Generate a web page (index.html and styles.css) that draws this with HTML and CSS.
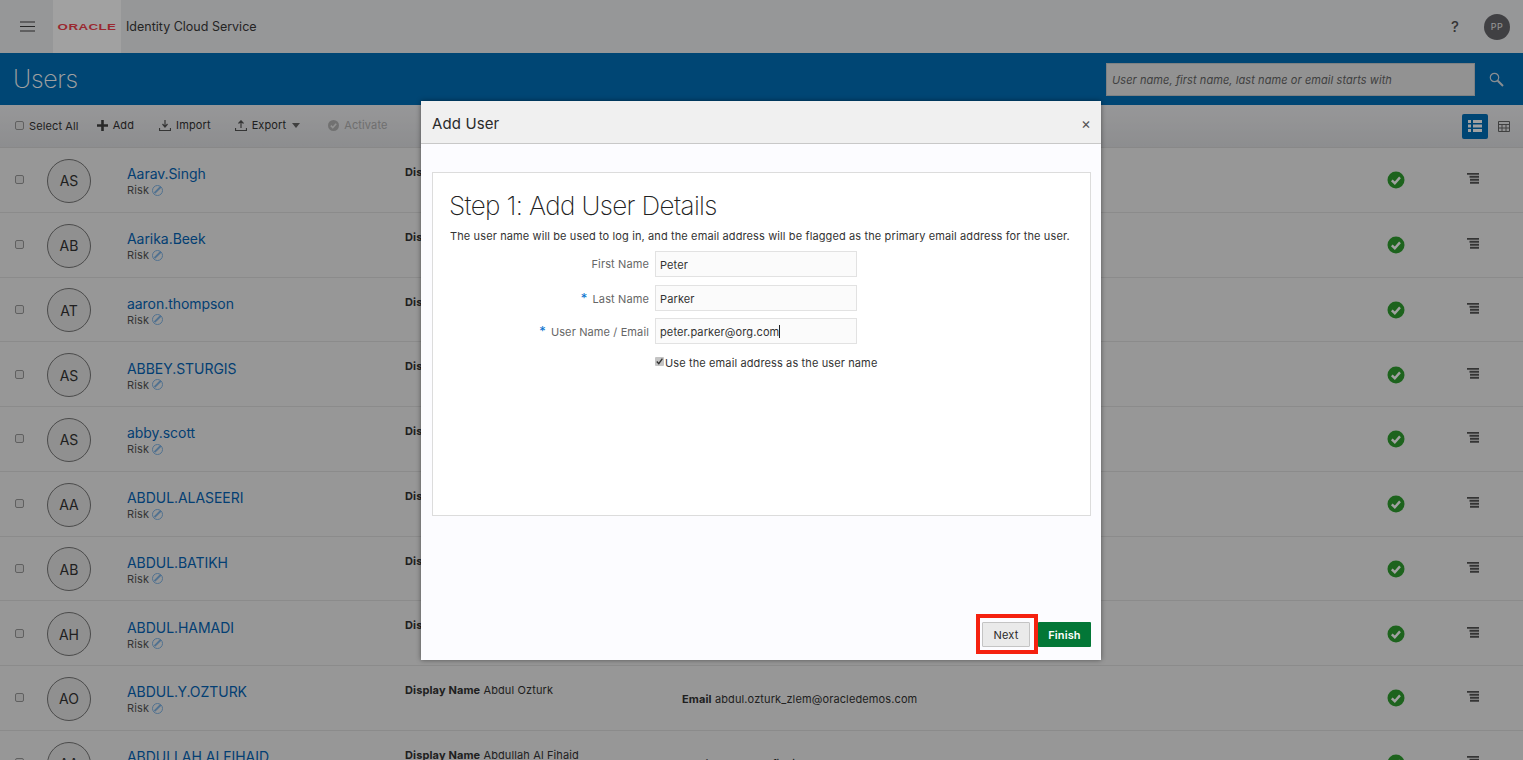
FILE: index.html
```html
<!DOCTYPE html>
<html>
<head>
    <link rel="stylesheet" href="styles.css">
</head>
<body>
    <!-- Top bar -->
    <div class="topbar">
        <svg class="burger" width="15" height="11" viewBox="0 0 15 11"><path d="M0 1h15M0 5.500h15M0 10h15" stroke="#404040" stroke-width="1.200"/></svg>
        <div class="logo"><span class="logo-text">ORACLE</span></div>
        <span class="app-name">Identity Cloud Service</span>
        <span class="help">?</span>
        <span class="me">PP</span>
    </div>

    <!-- Title band -->
    <div class="band">
        <span class="band-title">Users</span>
        <div class="search-box">User name, first name, last name or email starts with</div>
        <svg class="search-icon" width="15" height="15" viewBox="0 0 15 15"><circle cx="5.500" cy="5.500" r="4.200" fill="none" stroke="#d8dfe6" stroke-width="1.200"/><path d="M8.700 8.700l5.300 5.300" stroke="#d8dfe6" stroke-width="2"/></svg>
    </div>

    <!-- Toolbar -->
    <div class="toolbar">
        <span class="box"></span><span class="tool-select">Select All</span>
        <span class="tool tool-add"><svg width="11" height="11" viewBox="0 0 11 11"><path d="M5.500 0v11M0 5.500h11" stroke="#404040" stroke-width="2.600"/></svg>Add</span>
        <span class="tool tool-import"><svg width="12" height="11" viewBox="0 0 12 11"><path d="M6 0v6M3.500 4L6 7l2.500-3M.5 8v2.500h11V8" fill="none" stroke="#555" stroke-width="1.200"/></svg>Import</span>
        <span class="tool tool-export"><svg width="12" height="11" viewBox="0 0 12 11"><path d="M6 8V1M3.500 3.500L6 .8l2.500 2.700M.5 8v2.500h11V8" fill="none" stroke="#555" stroke-width="1.200"/></svg>Export<i class="caret"></i></span>
        <span class="tool tool-off"><svg width="11" height="11" viewBox="0 0 11 11"><circle cx="5.500" cy="5.500" r="5.500" fill="#b4b4b4"/><path d="M2.800 5.600l2 2 3.400-3.800" fill="none" stroke="#e8e8e8" stroke-width="1.500"/></svg>Activate</span>
        <div class="view-switch">
            <span class="view-on"><svg width="14" height="12" viewBox="0 0 14 12"><path d="M0 0h3v3H0zM5 0h9v3H5zM0 4.500h3v3H0zM5 4.500h9v3H5zM0 9h3v3H0zM5 9h9v3H5z" fill="#fff"/></svg></span>
            <svg class="view-grid" width="12" height="11" viewBox="0 0 12 11"><path d="M.5.5h11v10H.5zM.5 3.500h11M.5 7h11M4 3.500v7M8 3.500v7" fill="none" stroke="#666"/></svg>
        </div>
    </div>

    <!-- User list -->
    <div class="rows">
        <div class="row">
            <span class="box"></span><span class="avatar">AS</span>
            <div class="who"><a class="user">Aarav.Singh</a><span class="risk">Risk <i class="risk-icon"></i></span></div>
            <div class="display"><b>Display Name</b> Aarav Singh</div>
            <div class="email"></div>
            <span class="ok"><svg width="18" height="18" viewBox="0 0 18 18"><circle cx="9" cy="9" r="8.500" fill="#2f9e2f"/><path d="M4.800 9.300l3 2.900 5.200-5.800" fill="none" stroke="#fff" stroke-width="2.400"/></svg></span>
            <span class="more"><svg width="13" height="12" viewBox="0 0 13 12"><path d="M0 .8h12M2.500 3.800H12M3 6.800h9M3 9.800h9" stroke="#555" stroke-width="2"/></svg></span>
        </div>
        <div class="row">
            <span class="box"></span><span class="avatar">AB</span>
            <div class="who"><a class="user">Aarika.Beek</a><span class="risk">Risk <i class="risk-icon"></i></span></div>
            <div class="display"><b>Display Name</b> Aarika Beek</div>
            <div class="email"></div>
            <span class="ok"><svg width="18" height="18" viewBox="0 0 18 18"><circle cx="9" cy="9" r="8.500" fill="#2f9e2f"/><path d="M4.800 9.300l3 2.900 5.200-5.800" fill="none" stroke="#fff" stroke-width="2.400"/></svg></span>
            <span class="more"><svg width="13" height="12" viewBox="0 0 13 12"><path d="M0 .8h12M2.500 3.800H12M3 6.800h9M3 9.800h9" stroke="#555" stroke-width="2"/></svg></span>
        </div>
        <div class="row">
            <span class="box"></span><span class="avatar">AT</span>
            <div class="who"><a class="user">aaron.thompson</a><span class="risk">Risk <i class="risk-icon"></i></span></div>
            <div class="display"><b>Display Name</b> Aaron Thompson</div>
            <div class="email"></div>
            <span class="ok"><svg width="18" height="18" viewBox="0 0 18 18"><circle cx="9" cy="9" r="8.500" fill="#2f9e2f"/><path d="M4.800 9.300l3 2.900 5.200-5.800" fill="none" stroke="#fff" stroke-width="2.400"/></svg></span>
            <span class="more"><svg width="13" height="12" viewBox="0 0 13 12"><path d="M0 .8h12M2.500 3.800H12M3 6.800h9M3 9.800h9" stroke="#555" stroke-width="2"/></svg></span>
        </div>
        <div class="row">
            <span class="box"></span><span class="avatar">AS</span>
            <div class="who"><a class="user">ABBEY.STURGIS</a><span class="risk">Risk <i class="risk-icon"></i></span></div>
            <div class="display"><b>Display Name</b> Abbey Sturgis</div>
            <div class="email"></div>
            <span class="ok"><svg width="18" height="18" viewBox="0 0 18 18"><circle cx="9" cy="9" r="8.500" fill="#2f9e2f"/><path d="M4.800 9.300l3 2.900 5.200-5.800" fill="none" stroke="#fff" stroke-width="2.400"/></svg></span>
            <span class="more"><svg width="13" height="12" viewBox="0 0 13 12"><path d="M0 .8h12M2.500 3.800H12M3 6.800h9M3 9.800h9" stroke="#555" stroke-width="2"/></svg></span>
        </div>
        <div class="row">
            <span class="box"></span><span class="avatar">AS</span>
            <div class="who"><a class="user">abby.scott</a><span class="risk">Risk <i class="risk-icon"></i></span></div>
            <div class="display"><b>Display Name</b> Abby Scott</div>
            <div class="email"></div>
            <span class="ok"><svg width="18" height="18" viewBox="0 0 18 18"><circle cx="9" cy="9" r="8.500" fill="#2f9e2f"/><path d="M4.800 9.300l3 2.900 5.200-5.800" fill="none" stroke="#fff" stroke-width="2.400"/></svg></span>
            <span class="more"><svg width="13" height="12" viewBox="0 0 13 12"><path d="M0 .8h12M2.500 3.800H12M3 6.800h9M3 9.800h9" stroke="#555" stroke-width="2"/></svg></span>
        </div>
        <div class="row">
            <span class="box"></span><span class="avatar">AA</span>
            <div class="who"><a class="user">ABDUL.ALASEERI</a><span class="risk">Risk <i class="risk-icon"></i></span></div>
            <div class="display"><b>Display Name</b> Abdul Alaseeri</div>
            <div class="email"></div>
            <span class="ok"><svg width="18" height="18" viewBox="0 0 18 18"><circle cx="9" cy="9" r="8.500" fill="#2f9e2f"/><path d="M4.800 9.300l3 2.900 5.200-5.800" fill="none" stroke="#fff" stroke-width="2.400"/></svg></span>
            <span class="more"><svg width="13" height="12" viewBox="0 0 13 12"><path d="M0 .8h12M2.500 3.800H12M3 6.800h9M3 9.800h9" stroke="#555" stroke-width="2"/></svg></span>
        </div>
        <div class="row">
            <span class="box"></span><span class="avatar">AB</span>
            <div class="who"><a class="user">ABDUL.BATIKH</a><span class="risk">Risk <i class="risk-icon"></i></span></div>
            <div class="display"><b>Display Name</b> Abdul Batikh</div>
            <div class="email"></div>
            <span class="ok"><svg width="18" height="18" viewBox="0 0 18 18"><circle cx="9" cy="9" r="8.500" fill="#2f9e2f"/><path d="M4.800 9.300l3 2.900 5.200-5.800" fill="none" stroke="#fff" stroke-width="2.400"/></svg></span>
            <span class="more"><svg width="13" height="12" viewBox="0 0 13 12"><path d="M0 .8h12M2.500 3.800H12M3 6.800h9M3 9.800h9" stroke="#555" stroke-width="2"/></svg></span>
        </div>
        <div class="row">
            <span class="box"></span><span class="avatar">AH</span>
            <div class="who"><a class="user">ABDUL.HAMADI</a><span class="risk">Risk <i class="risk-icon"></i></span></div>
            <div class="display"><b>Display Name</b> Abdul Hamadi</div>
            <div class="email"></div>
            <span class="ok"><svg width="18" height="18" viewBox="0 0 18 18"><circle cx="9" cy="9" r="8.500" fill="#2f9e2f"/><path d="M4.800 9.300l3 2.900 5.200-5.800" fill="none" stroke="#fff" stroke-width="2.400"/></svg></span>
            <span class="more"><svg width="13" height="12" viewBox="0 0 13 12"><path d="M0 .8h12M2.500 3.800H12M3 6.800h9M3 9.800h9" stroke="#555" stroke-width="2"/></svg></span>
        </div>
        <div class="row">
            <span class="box"></span><span class="avatar">AO</span>
            <div class="who"><a class="user">ABDUL.Y.OZTURK</a><span class="risk">Risk <i class="risk-icon"></i></span></div>
            <div class="display"><b>Display Name</b> Abdul Ozturk</div>
            <div class="email"><b>Email</b> abdul.ozturk_zlem@oracledemos.com</div>
            <span class="ok"><svg width="18" height="18" viewBox="0 0 18 18"><circle cx="9" cy="9" r="8.500" fill="#2f9e2f"/><path d="M4.800 9.300l3 2.900 5.200-5.800" fill="none" stroke="#fff" stroke-width="2.400"/></svg></span>
            <span class="more"><svg width="13" height="12" viewBox="0 0 13 12"><path d="M0 .8h12M2.500 3.800H12M3 6.800h9M3 9.800h9" stroke="#555" stroke-width="2"/></svg></span>
        </div>
        <div class="row">
            <span class="box"></span><span class="avatar">AA</span>
            <div class="who"><a class="user">ABDULLAH.ALFIHAID</a><span class="risk">Risk <i class="risk-icon"></i></span></div>
            <div class="display"><b>Display Name</b> Abdullah Al Fihaid</div>
            <div class="email"><b>Email</b> abdullah.alfihaid@oracledemos.com</div>
            <span class="ok"><svg width="18" height="18" viewBox="0 0 18 18"><circle cx="9" cy="9" r="8.500" fill="#2f9e2f"/><path d="M4.800 9.300l3 2.900 5.200-5.800" fill="none" stroke="#fff" stroke-width="2.400"/></svg></span>
            <span class="more"><svg width="13" height="12" viewBox="0 0 13 12"><path d="M0 .8h12M2.500 3.800H12M3 6.800h9M3 9.800h9" stroke="#555" stroke-width="2"/></svg></span>
        </div>
    </div>

    <!-- Add User dialog -->
    <div class="dialog">
        <div class="dialog-head">
            <span>Add User</span>
            <span class="close">&times;</span>
        </div>
        <div class="dialog-body">
            <div class="panel">
                <h1>Step 1: Add User Details</h1>
                <p>The user name will be used to log in, and the email address will be flagged as the primary email address for the user.</p>
                <div class="form">
                    <label>First Name</label>
                    <div class="field">Peter</div>
                    <label><em>*</em>Last Name</label>
                    <div class="field">Parker</div>
                    <label><em>*</em>User Name / Email</label>
                    <div class="field">peter.parker@org.com<i class="cursor"></i></div>
                    <span></span>
                    <div class="use-email">
                        <svg width="9" height="9" viewBox="0 0 9 9"><rect width="9" height="9" rx="1" fill="#c4c4c4"/><path d="M1.800 4.500l2 2.200 3.600-5" fill="none" stroke="#333" stroke-width="1.400"/></svg>
                        <span>Use the email address as the user name</span>
                    </div>
                </div>
            </div>
        </div>
        <div class="dialog-foot">
            <div class="highlight"><button class="btn-next">Next</button></div>
            <button class="btn-finish">Finish</button>
        </div>
    </div>
</body>
</html>
```

FILE: styles.css
```css
html, body {
    margin: 0;
    height: 760px;
    overflow: hidden;
}

body {
    background: #f0f0f0;
    font-family: Inter, "Liberation Sans", sans-serif;
    font-size: 11px;
    letter-spacing: 0.12px;
    color: #333;
    position: relative;
}

/* page dim behind the dialog */
body::after {
    content: "";
    position: absolute;
    top: 0;
    left: 0;
    right: 0;
    bottom: 0;
    background: rgba(0, 0, 0, 0.37);
    z-index: 1;
}

.topbar {
    height: 53px;
    background: #eeeff1;
    display: flex;
    align-items: center;
}

.burger {
    margin-left: 20px;
}

.logo {
    margin-left: 18px;
    width: 68px;
    height: 53px;
    background: #ffffff;
    display: flex;
    align-items: center;
    justify-content: center;
}

.logo-text {
    color: #f4404c;
    font-family: "Liberation Sans", sans-serif;
    font-weight: bold;
    font-size: 9.500px;
    letter-spacing: 0.3px;
    transform: scaleX(1.4);
}

.app-name {
    margin-left: 5px;
    font-size: 12.500px;
    letter-spacing: 0;
    color: #3a3a3a;
}

.help {
    margin-left: auto;
    font-size: 15px;
    font-weight: 500;
    color: #555;
}

.me {
    margin: 0 13px 0 25px;
    width: 26px;
    height: 26px;
    border-radius: 50%;
    background: #66666a;
    color: #eee;
    font-size: 9px;
    letter-spacing: 0.4px;
    display: flex;
    align-items: center;
    justify-content: center;
}

.band {
    height: 52px;
    background: #006fb8;
    display: flex;
    align-items: center;
}

.band-title {
    margin-left: 13px;
    font-size: 25px;
    font-weight: 200;
    letter-spacing: -0.3px;
    color: #fff;
}

.search-box {
    margin-left: auto;
    width: 362px;
    height: 31px;
    line-height: 32px;
    padding-left: 5px;
    background: #e8e8e8;
    border: 1px solid #c8ccd0;
    font-size: 11px;
    font-style: italic;
    letter-spacing: 0.08px;
    color: #666;
}

.search-icon {
    margin: 0 19px 0 14px;
}

.toolbar {
    height: 43px;
    box-sizing: border-box;
    border-bottom: 1px solid #d8d8d8;
    background: linear-gradient(#f0f0f2, #dfe0e3);
    display: flex;
    align-items: center;
    padding: 0 0 2px 15px;
}

.box {
    width: 9px;
    height: 9px;
    border: 1px solid #999;
    border-radius: 2px;
    background: #e5e5e5;
    box-sizing: border-box;
    flex: none;
}

.tool-select {
    margin-left: 5px;
    margin-top: 2px;
}

.tool {
    display: flex;
    align-items: center;
    gap: 5px;
    font-size: 11px;
}

.tool-add {
    margin-left: 18px;
}

.tool-import {
    margin-left: 25px;
}

.tool-export {
    margin-left: 24px;
}

.caret {
    margin-left: 1px;
    border-left: 4px solid transparent;
    border-right: 4px solid transparent;
    border-top: 5px solid #666;
}

.tool-off {
    margin-left: 28px;
    color: #b0b0b0;
}

.view-switch {
    display: flex;
    align-items: center;
    margin: 2px 13px 0 auto;
}

.view-on {
    width: 26px;
    height: 25px;
    border-radius: 2px;
    background: #006fb8;
    display: flex;
    align-items: center;
    justify-content: center;
}

.view-grid {
    margin-left: 10px;
}

.row {
    height: 64.750px;
    box-sizing: border-box;
    border-bottom: 1px solid #dcdcdc;
    display: grid;
    grid-template-columns: 32px 80px 278px 277px 705px 80px 40px;
    align-items: center;
    padding-left: 15px;
}

.avatar {
    width: 44px;
    height: 44px;
    box-sizing: border-box;
    border: 1px solid #777;
    border-radius: 50%;
    background: #e4e4e4;
    font-size: 14px;
    letter-spacing: 0;
    display: flex;
    align-items: center;
    justify-content: center;
    margin-top: 2px;
}

.who {
    display: flex;
    flex-direction: column;
    margin-top: 3px;
}

.user {
    font-size: 14px;
    line-height: 17px;
    letter-spacing: -0.05px;
    color: #0565b6;
}

.risk {
    margin-top: 1px;
    line-height: 14px;
    display: flex;
    align-items: center;
    gap: 3px;
    color: #555;
}

/* the round "not available" mark after Risk */
.risk-icon {
    position: relative;
    width: 11px;
    height: 11px;
    box-sizing: border-box;
    border: 1.500px solid #80b4e4;
    border-radius: 50%;
}

.risk-icon::after {
    content: "";
    position: absolute;
    left: -0.500px;
    top: 3px;
    width: 9px;
    height: 1.500px;
    background: #80b4e4;
    transform: rotate(-45deg);
}

.display {
    align-self: start;
    padding-top: 17px;
}

.email {
    margin-top: 2px;
}

.ok {
    display: flex;
    margin-top: 1px;
}

.more {
    display: flex;
    margin-top: -1px;
}

.dialog {
    position: absolute;
    z-index: 2;
    left: 421px;
    top: 101px;
    width: 680px;
    height: 559px;
    background: #fcfcff;
    box-shadow: 0 0 5px rgba(0, 0, 0, 0.45);
    display: flex;
    flex-direction: column;
}

.dialog-head {
    height: 43px;
    box-sizing: border-box;
    border-bottom: 1px solid #c8c8c8;
    background: #f0f0f0;
    display: flex;
    align-items: center;
    justify-content: space-between;
    padding: 2px 10px 0 11px;
    font-size: 15px;
    color: #2a2a2a;
}

.close {
    font-size: 15px;
    color: #555;
}

.dialog-body {
    flex: 1;
    padding: 28px 10px 0 11px;
}

.panel {
    height: 344px;
    box-sizing: border-box;
    border: 1px solid #dcdcdc;
    background: #fff;
    padding: 17px 17px 0;
}

h1 {
    margin: 0 0 0 -1px;
    font-size: 26px;
    line-height: 32px;
    font-weight: 200;
    letter-spacing: -0.62px;
    color: #222;
}

.panel p {
    margin: 7px 0 0;
    font-size: 11px;
    line-height: 14px;
    white-space: nowrap;
    color: #333;
}

.form {
    margin-top: 8px;
    display: grid;
    grid-template-columns: 199px 202px;
    column-gap: 6px;
    row-gap: 7.500px;
    align-items: center;
}

.form label {
    text-align: right;
    color: #666;
}

.form em {
    color: #0572ce;
    font-style: normal;
    font-size: 13px;
    margin-right: 5px;
}

.field {
    height: 26px;
    box-sizing: border-box;
    border: 1px solid #e2e2e2;
    background: #fbfbfb;
    line-height: 26px;
    padding-left: 4px;
    color: #333;
}

.cursor {
    display: inline-block;
    width: 1px;
    height: 13px;
    background: #222;
    vertical-align: -2px;
}

.use-email {
    margin-top: 4px;
    display: flex;
    align-items: center;
    white-space: nowrap;
    gap: 1px;
}

.use-email svg {
    flex: none;
    margin-top: -2px;
}

.dialog-foot {
    height: 46px;
    display: flex;
    align-items: flex-start;
    justify-content: flex-end;
    padding-right: 10px;
}

.highlight {
    border: 4px solid #f5210f;
    padding: 4px 4px 3px 2px;
    display: flex;
    height: 40px;
    box-sizing: border-box;
}

button {
    font-family: Inter, "Liberation Sans", sans-serif;
    font-size: 11px;
    letter-spacing: 0.12px;
    height: 25px;
    border-radius: 1px;
    padding: 0;
    cursor: pointer;
}

.btn-next {
    width: 48px;
    margin: 0;
    padding-top: 1px;
    background: #eaeaea;
    border: 1px solid #c4c4c4;
    color: #2a2a2a;
    font-weight: 400;
}

.btn-finish {
    width: 53px;
    margin-top: 8px;
    background: #037737;
    border: 0;
    color: #fff;
    font-weight: 600;
}
```
